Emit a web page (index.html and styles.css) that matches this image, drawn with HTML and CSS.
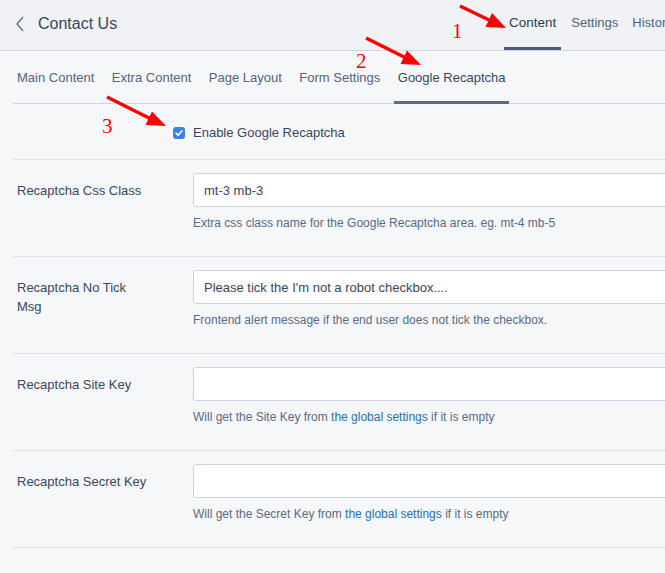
FILE: index.html
```html
<!DOCTYPE html>
<html lang="en">
<head>
<meta charset="utf-8">
<title>Contact Us</title>
<link rel="stylesheet" href="styles.css">
</head>
<body>
<div class="page">
  <header class="topbar">
    <div class="title-wrap">
      <svg class="back" width="10" height="16" viewBox="0 0 10 16"><path d="M8 1 L2 8 L8 15" fill="none" stroke="#5b6782" stroke-width="1.3"/></svg>
      <h1 class="title">Contact Us</h1>
    </div>
    <nav class="maintabs">
      <span class="maintab active">Content</span>
      <span class="maintab">Settings</span>
      <span class="maintab">History</span>
    </nav>
  </header>

  <main class="body">
    <nav class="subtabs">
      <span class="subtab">Main Content</span>
      <span class="subtab">Extra Content</span>
      <span class="subtab">Page Layout</span>
      <span class="subtab">Form Settings</span>
      <span class="subtab active">Google Recaptcha</span>
    </nav>

    <div class="check-row">
      <span class="checkbox"><svg width="12" height="12" viewBox="0 0 12 12"><path d="M3 6.2 L5.1 8.3 L9 3.9" fill="none" stroke="#fff" stroke-width="1.6" stroke-linecap="round" stroke-linejoin="round"/></svg></span>
      <span class="check-label">Enable Google Recaptcha</span>
    </div>

    <div class="field">
      <label class="field-label">Recaptcha Css Class</label>
      <div class="field-control">
        <div class="input">mt-3 mb-3</div>
        <p class="help">Extra css class name for the Google Recaptcha area. eg. mt-4 mb-5</p>
      </div>
    </div>

    <div class="field">
      <label class="field-label">Recaptcha No Tick<br>Msg</label>
      <div class="field-control">
        <div class="input">Please tick the I'm not a robot checkbox....</div>
        <p class="help">Frontend alert message if the end user does not tick the checkbox.</p>
      </div>
    </div>

    <div class="field">
      <label class="field-label">Recaptcha Site Key</label>
      <div class="field-control">
        <div class="input"></div>
        <p class="help">Will get the Site Key from <a class="link">the global settings</a> if it is empty</p>
      </div>
    </div>

    <div class="field last">
      <label class="field-label">Recaptcha Secret Key</label>
      <div class="field-control">
        <div class="input"></div>
        <p class="help">Will get the Secret Key from <a class="link">the global settings</a> if it is empty</p>
      </div>
    </div>
  </main>

  <svg class="annotations" width="665" height="573" viewBox="0 0 665 573">
    <g fill="#f00" stroke="#f00">
      <line x1="460" y1="6" x2="490" y2="20.5" stroke-width="3.5"/>
      <polygon points="506,28 485.5,27 492,13" stroke="none"/>
      <line x1="366" y1="38" x2="405" y2="57.5" stroke-width="3.5"/>
      <polygon points="421,65 400.5,64 407,50.5" stroke="none"/>
      <line x1="107" y1="97" x2="150" y2="118.5" stroke-width="3.5"/>
      <polygon points="166,126 145.5,125 152,111.5" stroke="none"/>
    </g>
    <g class="num" fill="#f00">
      <text x="452" y="38">1</text>
      <text x="356" y="68">2</text>
      <text x="102" y="133">3</text>
    </g>
  </svg>
</div>
</body>
</html>
```

FILE: styles.css
```css
* { box-sizing: border-box; }
html, body { margin: 0; padding: 0; }
body {
  font-family: "Liberation Sans", Arial, sans-serif;
  background: #f6f7f9;
  color: #3a4660;
  overflow: hidden;
}
.page {
  position: relative;
  width: 665px;
  height: 573px;
  overflow: hidden;
}
.topbar {
  height: 51px;
  background: #f0f2f6;
  border-bottom: 1px solid #cfd7e2;
  display: flex;
  align-items: stretch;
  padding-left: 15px;
}
.title-wrap {
  flex: 1;
  display: flex;
  align-items: center;
  gap: 13px;
  padding-bottom: 2px;
}
.back { display: block; }
.title {
  margin: 0;
  font-size: 16px;
  font-weight: normal;
  color: #3a4660;
}
.maintabs {
  flex: none;
  width: 161px;
  display: flex;
  gap: 6px;
  overflow: hidden;
}
.maintab {
  flex: none;
  display: flex;
  align-items: center;
  padding: 0 4px 3px;
  font-size: 13px;
  color: #55647f;
  border-bottom: 3px solid transparent;
}
.maintab.active {
  color: #2f3b55;
  border-bottom-color: #4c5a78;
  padding: 0 5px 3px;
  font-size: 13.5px;
}
.subtabs {
  display: flex;
  gap: 9.5px;
  margin-left: 13px;
  height: 53px;
  border-bottom: 1px solid #cfd7e2;
}
.subtab {
  display: flex;
  align-items: center;
  padding: 2px 4px 0;
  font-size: 13px;
  color: #55647f;
  border-bottom: 3px solid transparent;
  margin-bottom: -1px;
}
.subtab.active {
  color: #3a4660;
  border-bottom-color: #5b6a88;
}
.check-row {
  display: flex;
  align-items: center;
  height: 56px;
  padding-top: 2px;
  margin-left: 13px;
  padding-left: 160px;
  border-bottom: 1px solid #dde2ea;
}
.checkbox {
  width: 12px;
  height: 12px;
  border-radius: 3px;
  background: #3b82f0;
  display: flex;
  align-items: center;
  justify-content: center;
}
.checkbox svg { display: block; }
.check-label {
  margin-left: 8px;
  font-size: 13px;
  color: #3a4660;
}
.field {
  display: flex;
  margin-left: 13px;
  padding: 13px 0 24px;
  border-bottom: 1px solid #dde2ea;
}
.field-label {
  width: 180px;
  flex: none;
  padding-left: 4px;
  padding-top: 8px;
  font-size: 13px;
  line-height: 19px;
  color: #3a4660;
}
.field-control {
  flex: none;
  width: 520px;
}
.input {
  height: 34px;
  background: #fff;
  border: 1px solid #cdd4df;
  border-radius: 3px;
  padding: 0 10px;
  display: flex;
  align-items: center;
  font-size: 13px;
  color: #3a4660;
}
.help {
  margin: 8px 0 0;
  font-size: 12px;
  line-height: 17px;
  color: #5a6a86;
}
.link { color: #1f6fb8; text-decoration: none; }
.annotations {
  position: absolute;
  left: 0;
  top: 0;
  pointer-events: none;
}
.num text {
  font-family: "Liberation Serif", "Times New Roman", serif;
  font-size: 21px;
}
```
